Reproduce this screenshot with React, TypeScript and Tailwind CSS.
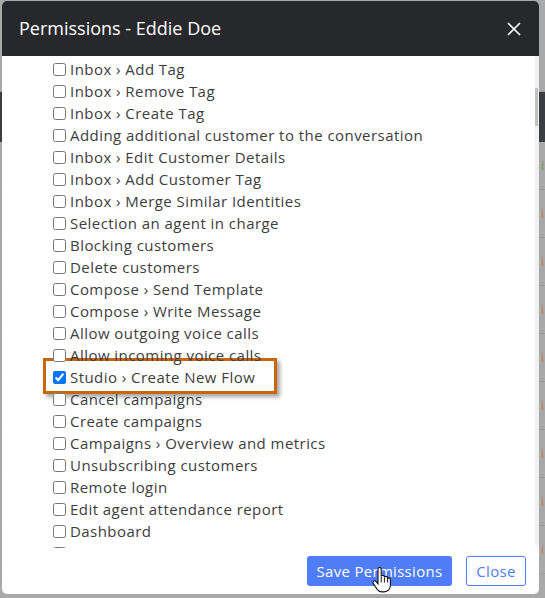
import React from "react";

const permissions = [
  "Inbox › Add Tag",
  "Inbox › Remove Tag",
  "Inbox › Create Tag",
  "Adding additional customer to the conversation",
  "Inbox › Edit Customer Details",
  "Inbox › Add Customer Tag",
  "Inbox › Merge Similar Identities",
  "Selection an agent in charge",
  "Blocking customers",
  "Delete customers",
  "Compose › Send Template",
  "Compose › Write Message",
  "Allow outgoing voice calls",
  "Allow incoming voice calls",
  "Studio › Create New Flow",
  "Cancel campaigns",
  "Create campaigns",
  "Campaigns › Overview and metrics",
  "Unsubscribing customers",
  "Remote login",
  "Edit agent attendance report",
  "Dashboard",
  "",
];

const HIGHLIGHT = "Studio › Create New Flow";

function PermissionRow({ label }: { label: string }) {
  const highlighted = label === HIGHLIGHT;
  return (
    <div className="relative flex h-[22px] shrink-0 items-center gap-[4px] pl-[51px]">
      {highlighted && (
        <div className="absolute left-[41px] top-[-8px] h-[36px] w-[234px] border-[3px] border-[#c8650f] bg-white shadow-[3px_3px_4px_rgba(0,0,0,0.35)]" />
      )}
      <input
        type="checkbox"
        readOnly
        checked={highlighted}
        className="relative z-10 m-0 h-[13px] w-[13px]"
      />
      {label && (
        <span className="relative z-10 whitespace-nowrap text-[15px] tracking-[0.45px] text-[#3d3d3d]">
          {label}
        </span>
      )}
    </div>
  );
}

function HandCursor() {
  return (
    <svg width="20" height="26" viewBox="0 0 20 26" className="absolute left-[372px] top-[567px]">
      <path
        d="M6 2.2c0-1 .7-1.7 1.6-1.7S9.2 1.2 9.2 2.2v7.3c.3-.8 1-1.2 1.7-1.2.9 0 1.5.7 1.5 1.6v.6c.3-.7.9-1.1 1.6-1.1.9 0 1.5.7 1.5 1.6v.8c.3-.6.8-.9 1.4-.9.9 0 1.5.7 1.5 1.600v5.8c0 3.6-2.6 6.6-6.3 6.6H10c-2.2 0-3.6-.9-4.9-2.6L1.4 16.6c-.6-.8-.5-1.8.2-2.4.7-.6 1.7-.5 2.3.2L6 16.8V2.2z"
        fill="#fff"
        stroke="#111"
        strokeWidth="1.1"
      />
      <path d="M9.2 10v5.5M12.4 11v4.5M15.6 12v3.5" stroke="#111" strokeWidth="1" />
    </svg>
  );
}

export default function App() {
  return (
    <div
      className="relative h-[598px] w-[545px] overflow-hidden bg-[#a9a9a9]"
      style={{ fontFamily: '"Open Sans", "Noto Sans", sans-serif' }}
    >
      {/* dimmed page behind the modal */}
      <div className="h-[92px] border-b border-[#9c9c9c]" />
      <div className="h-[50px] bg-[#3c3d41]" />
      {[0, 1, 2, 3, 4, 5, 6, 7, 8].map((i) => (
        <div key={i} className="flex h-[48px] items-center justify-end border-b border-[#9d9d9d] pr-[1px]">
          <span className={i === 0 ? "text-[12px] text-[#5f9f4f]" : "text-[12px] text-[#c07a4a]"}>i</span>
        </div>
      ))}

      {/* modal */}
      <div className="absolute left-[2px] top-[1px] flex h-[593px] w-[537px] flex-col overflow-hidden rounded-[5px] bg-white">
        <div className="flex h-[55px] shrink-0 items-center justify-between bg-[#27282c] pl-[17px] pr-[17px]">
          <span className="text-[18px] text-white">Permissions - Eddie Doe</span>
          <svg width="14" height="14" viewBox="0 0 14 14" className="mr-[1px]">
            <path d="M1 1L13 13M13 1L1 13" stroke="#fff" strokeWidth="1.6" />
          </svg>
        </div>

        <div className="flex min-h-0 flex-1">
          <div className="flex min-w-0 flex-1 flex-col overflow-hidden pt-[2px]">
            {permissions.map((p, i) => (
              <PermissionRow key={i} label={p} />
            ))}
          </div>
          <div className="mb-[3px] w-[4px] shrink-0 bg-[#f1f1f1]">
            <div className="mt-[32px] h-[38px] w-[3px] bg-[#c1c1c1]" />
          </div>
        </div>

        <div className="flex h-[46px] shrink-0 items-start justify-end gap-[14px] pr-[13px] pt-[8px]">
          <button className="h-[30px] w-[145px] rounded-[3px] bg-[#4f7cf7] text-[15px] tracking-[0.3px] text-white">
            Save Permissions
          </button>
          <button className="h-[30px] w-[60px] rounded-[3px] border border-[#4f7cf7] bg-white text-[15px] tracking-[0.3px] text-[#4f7cf7]">
            Close
          </button>
        </div>
      </div>

      <HandCursor />
    </div>
  );
}
